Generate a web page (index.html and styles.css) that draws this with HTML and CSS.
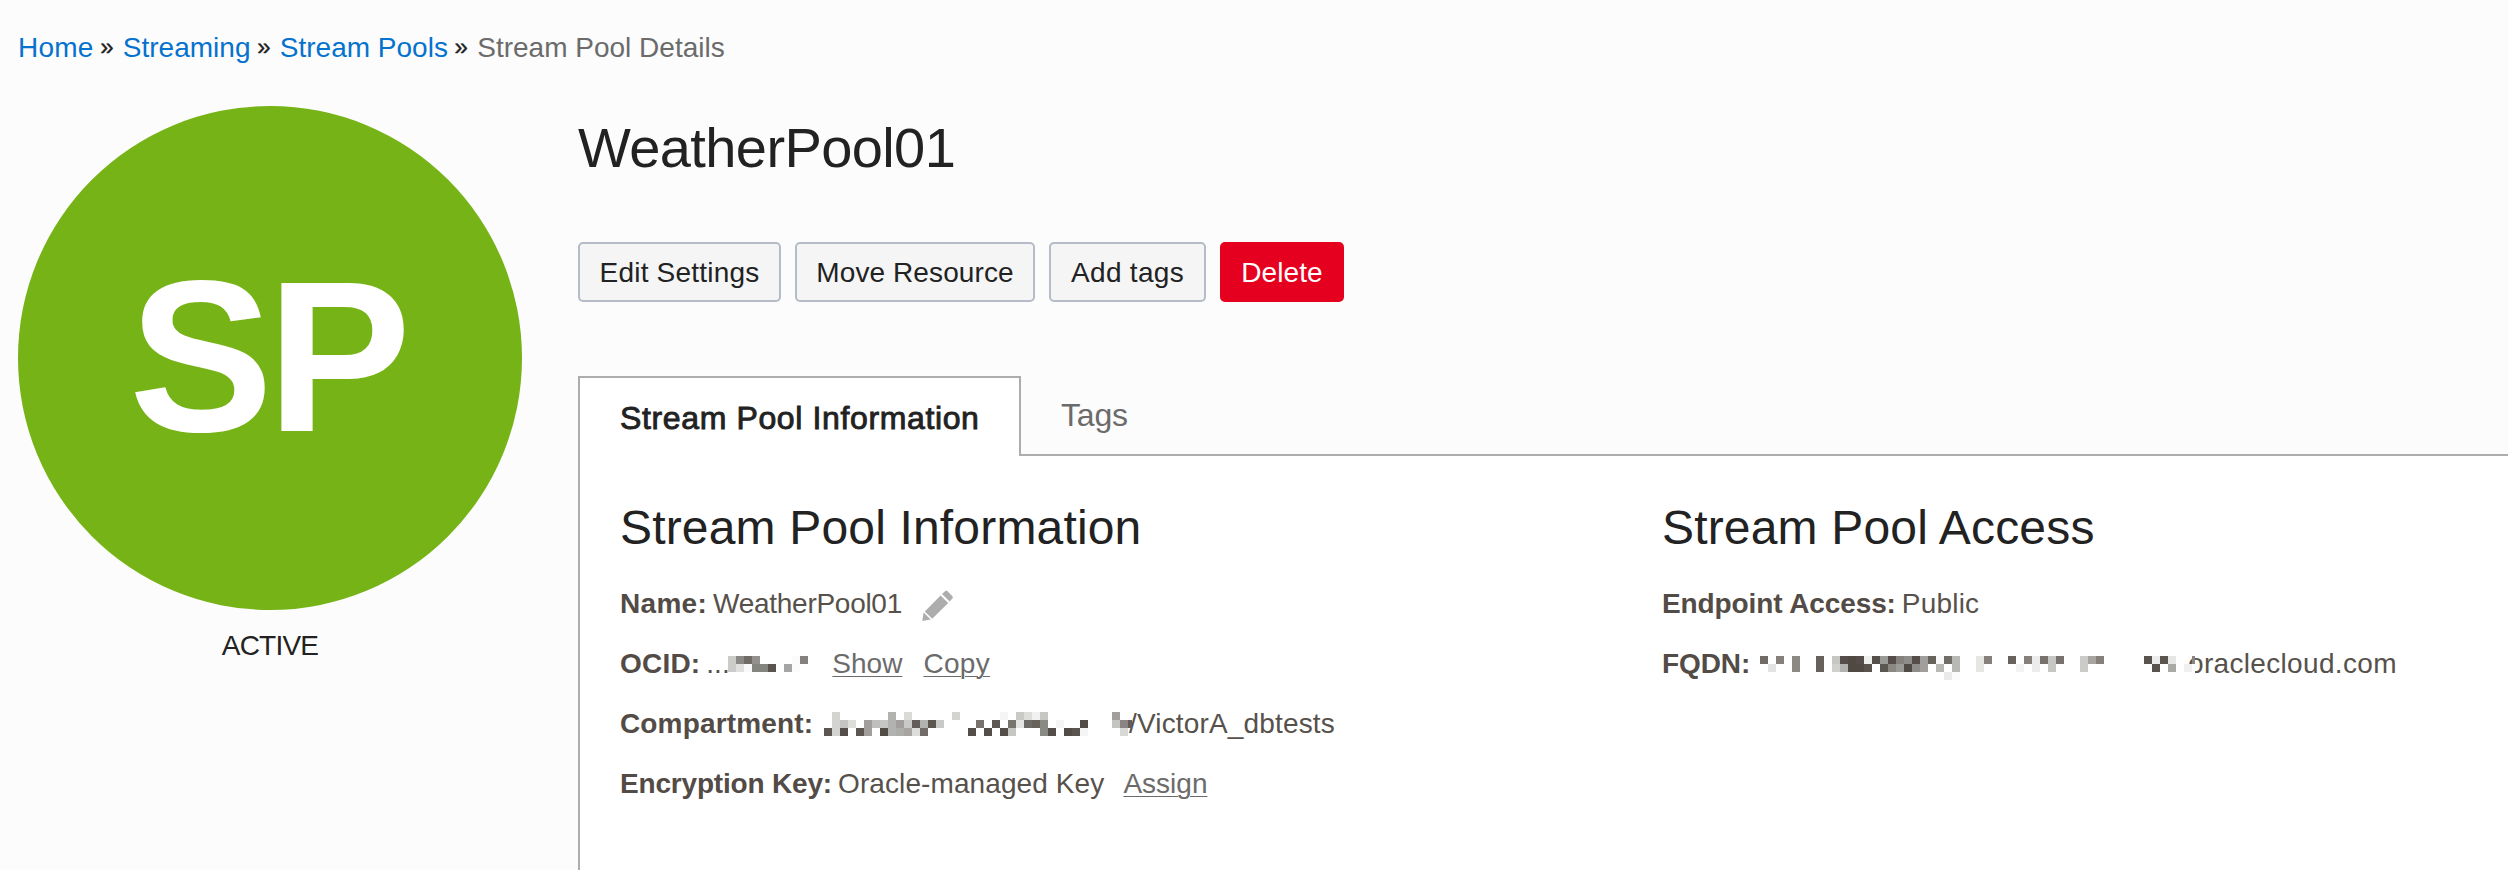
FILE: index.html
```
<!DOCTYPE html>
<html lang="en">
<head>
<meta charset="utf-8">
<title>Stream Pool Details</title>
<link rel="stylesheet" href="styles.css">
</head>
<body>
<nav class="crumbs">
  <a class="home">Home</a><span class="sep">»</span><a>Streaming</a><span class="sep">»</span><a>Stream Pools</a><span class="sep">»</span><span class="current">Stream Pool Details</span>
</nav>
<div class="page">
  <aside class="side">
    <div class="badge">SP</div>
    <div class="status">ACTIVE</div>
  </aside>
  <main class="main">
    <h1 class="title">WeatherPool01</h1>
    <div class="actions">
      <button class="btn edit">Edit Settings</button>
      <button class="btn move">Move Resource</button>
      <button class="btn add">Add tags</button>
      <button class="btn delete">Delete</button>
    </div>
    <div class="tabs">
      <div class="tab active">Stream Pool Information</div>
      <div class="tab idle">Tags</div>
    </div>
    <div class="panel">
      <section class="col info">
        <h2>Stream Pool Information</h2>
        <div class="row"><b class="name-label">Name:</b><span class="name-value">WeatherPool01</span>
          <svg class="pencil" width="32" height="32" viewBox="0 0 32 32"><g fill="#adadad"><path d="M0.3 31 L1.6 22.6 L8.6 29.6 Z"/><path d="M2.8 21.4 L18.6 5.4 L26.2 13 L10.2 28.8 Z"/><path d="M20 4 L23.2 .9 Q24.2 0 25.3 .9 L30.4 6.2 Q31.4 7.3 30.4 8.4 L27.6 11.6 Z"/></g></svg>
        </div>
        <div class="row"><b class="ocid-label">OCID:</b><span class="dots">...</span><svg class="mosaic" id="ocid" width="80" height="24"></svg><a class="link show">Show</a><a class="link copy">Copy</a></div>
        <div class="row"><b class="comp-label">Compartment:</b><svg class="mosaic high" id="compartment" width="308" height="24"></svg><span class="comp-value">/VictorA_dbtests</span></div>
        <div class="row"><b class="key-label">Encryption Key:</b><span class="key-value">Oracle-managed Key</span><a class="link">Assign</a></div>
      </section>
      <section class="col access">
        <h2>Stream Pool Access</h2>
        <div class="row"><b class="endpoint-label">Endpoint Access:</b><span class="public">Public</span></div>
        <div class="row"><b class="fqdn-label">FQDN:</b><svg class="mosaic" id="fqdn" width="435" height="24"></svg><span class="domain">oraclecloud.com</span></div>
      </section>
    </div>
  </main>
</div>
<script src="mosaic.js"></script>
</body>
</html>
```
FILE: styles.css
```
* { box-sizing: border-box; }
body {
  margin: 0;
  height: 870px;
  overflow: hidden;
  background: #fcfcfc;
  font: 28px "Liberation Sans", Arial, sans-serif;
  color: #222;
  font-kerning: normal;
}

.crumbs { display: flex; padding: 30px 0 0 18px; height: 65px; line-height: 36px; white-space: nowrap; }
.crumbs a { color: #0572ce; }
.crumbs .home { letter-spacing: .2px; }
.crumbs .current { color: #6b6b6b; }
.sep { font-size: 24px; margin: -1px 9.3px 0 6.7px; -webkit-text-stroke: .4px #222; }

.page { display: flex; gap: 56px; padding: 41px 0 0 18px; height: 805px; }
.side { flex: none; width: 504px; }
.badge {
  height: 504px;
  padding-left: 111px;
  border-radius: 50%;
  background: #76b316;
  color: #fff;
  font-size: 216px;
  font-weight: bold;
  line-height: 501px;
  letter-spacing: -6px;
}
.status { text-align: center; line-height: 71px; letter-spacing: -.8px; }

.main { flex: 1; min-width: 0; display: flex; flex-direction: column; }
.title { margin: 10px 0 0; font-size: 56px; line-height: 64px; font-weight: normal; letter-spacing: -.6px; }

.actions { display: flex; gap: 14px; margin-top: 62px; }
.btn {
  height: 60px;
  padding: 2px 0 0;
  border: 2px solid #b5bcc8;
  border-radius: 5px;
  background: #f5f5f5;
  color: #222;
  font: inherit;
  line-height: 54px;
  letter-spacing: .1px;
  white-space: nowrap;
}
.edit { width: 203px; letter-spacing: .2px; }
.move { width: 240px; }
.add { width: 157px; letter-spacing: .3px; }
.delete { width: 124px; background: #e6001f; border-color: #e6001f; color: #fff; }

.tabs { display: flex; height: 80px; margin-top: 74px; background: linear-gradient(#adadad, #adadad) left bottom / 100% 2px no-repeat; }
.tab { font-size: 32px; white-space: nowrap; }
.active {
  width: 443px;
  padding-left: 40px;
  border: 2px solid #adadad;
  border-bottom: 0;
  background: #fff;
  line-height: 80px;
  letter-spacing: .63px;
  -webkit-text-stroke: .9px #222;
}
.idle { padding-left: 40px; line-height: 78px; color: #6b6b6b; letter-spacing: -.2px; }

.panel { display: flex; flex: 1; padding: 42px 0 0 40px; border-left: 2px solid #adadad; background: #fff; }
.info { width: 1042px; }
h2 { margin: 0 0 15px; font-size: 48px; line-height: 60px; font-weight: normal; letter-spacing: .17px; }
.row { display: flex; height: 60px; line-height: 62px; color: #57514b; white-space: nowrap; }
.row b { color: #524b46; margin-right: 6px; }
.row .name-label { letter-spacing: .3px; }
.name-value { letter-spacing: -.28px; }
.pencil { margin: 17px 0 0 20px; }
.row .ocid-label { letter-spacing: .2px; }
.dots { width: 22px; overflow: hidden; }
.row .comp-label { width: 204px; margin-right: 0; letter-spacing: .15px; }
.comp-value { margin-left: -3px; letter-spacing: .16px; }
.row .key-label { letter-spacing: -.18px; }
.key-value { letter-spacing: .1px; margin-right: 19px; }
.link { color: #6b6b6b; text-decoration: underline; text-decoration-thickness: 1px; text-underline-offset: 3px; }
.show { margin-left: 24px; }
.copy { margin-left: 21px; letter-spacing: .3px; }
.row .endpoint-label { letter-spacing: -.1px; }
.public { letter-spacing: .2px; }
.row .fqdn-label { width: 98px; margin-right: 0; letter-spacing: -.1px; }
.domain { margin-left: -7px; letter-spacing: .33px; }

.mosaic { flex: none; margin-top: 23px; position: relative; z-index: 1; }
.high { margin-top: 19px; }
```
FILE: mosaic.js
```
// Each row lists "column colour" pairs; a cell is 8px square.
var mosaics = {
  ocid: [
    "0 cbcbc9,1 8b8985,2 716b68,3 92918d,8 fbfbfc,9 858180",
    "0 cbcbc9,1 e0e0df,2 f9f9fb,3 85857f,4 85857f,5 5a534e,7 a5a5a5,8 fbfbfb"
  ],
  compartment: [
    "1 d3d3d2,8 b2b2b0,10 dadad9,16 d3d3d2,22 f5f5f5,24 c9c9c7,25 dddddc,26 f1f1f1,27 c6c6c4,36 a09f9d",
    "1 d3d3d2,2 c4c4c2,3 dddddc,5 a09f9d,6 bfbfbe,7 c6c6c4,8 b2b2b0,9 a09f9d,10 c9c9c7,11 645c58,12 b2b2b0,13 5d5550,14 c9c9c7,19 78716e,21 5f5752,23 78756f,24 e4e4e3,25 6d6a65,26 67615b,27 8a8a84,29 f5f5f5,32 524b46,36 c4c4c2,37 8a8582,38 645c58",
    "0 5d5550,1 d3d3d2,2 554d49,4 5d5550,5 a09f9d,7 524b46,8 b2b2b0,9 adada9,10 a6a5a1,11 dddddc,12 716c67,18 554d49,20 554d49,22 554d49,23 c6c6c4,27 8a8a84,28 554d49,30 524b46,31 5a534e,32 f5f5f5,37 d8d8d7"
  ],
  fqdn: [
    "0 706b66,2 86807d,4 8a8983,7 67615b,9 c6c6c5,10 554d49,11 4f4843,12 554d49,13 eef0ee,14 554f49,15 9a9a96,16 554d49,17 86807d,18 8f8d89,19 554d49,20 a09f9d,21 67625c,22 f9f9f9,23 706c66,24 b8b8b6,27 e6e6e4,28 86807d,31 67625c,33 86807d,34 ececec,35 78716e,36 c6c6c5,37 78716e,40 cbcbc9,41 a6a5a2,42 86807d,48 5a534d,49 ececec,50 5a564f,51 e6e6e4,54 8a8582",
    "1 e3e3e3,4 8a8983,7 67615b,9 d0d0cf,10 b2b2b0,11 4f4843,12 4f4843,13 5a534d,15 5a5650,16 8a8883,17 9a9a96,18 504a44,19 8f8d89,20 a09f9d,22 b8b8b6,24 b8b8b6,27 e6e6e4,32 f3f3f3,34 ececec,36 c6c6c5,40 cbcbc9,49 5a534d,51 a9a9a6,53 f0f0f0,54 ffffff",
    "23 eaeaea,24 fbfbfb,53 ffffff,54 ffffff"
  ]
};
var NS = "http://www.w3.org/2000/svg";
function rect(svg, x, y, w, h, fill) {
  var r = document.createElementNS(NS, "rect");
  r.setAttribute("x", x);
  r.setAttribute("y", y);
  r.setAttribute("width", w);
  r.setAttribute("height", h);
  r.setAttribute("fill", fill);
  r.setAttribute("shape-rendering", "crispEdges");
  svg.appendChild(r);
}
Object.keys(mosaics).forEach(function (id) {
  var svg = document.getElementById(id);
  mosaics[id].forEach(function (line, row) {
    line.split(",").forEach(function (cell) {
      var p = cell.split(" ");
      rect(svg, p[0] * 8, row * 8, 8, 8, "#" + p[1]);
    });
  });
});
```
